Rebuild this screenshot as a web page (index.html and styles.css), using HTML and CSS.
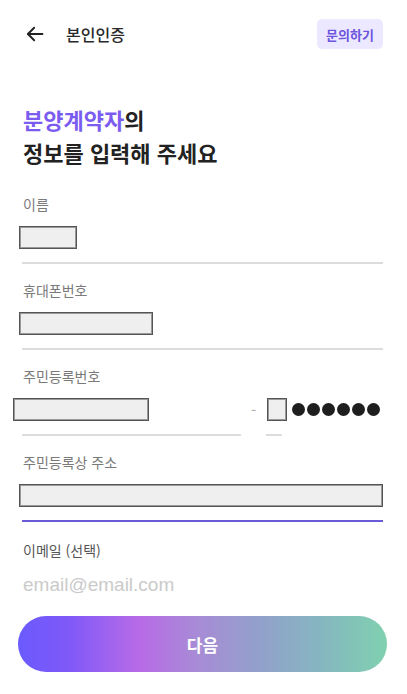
FILE: index.html
```html
<!DOCTYPE html>
<html lang="ko">

    <head>
        <meta charset="UTF-8">
        <meta name="viewport" content="width=device-width, initial-scale=1.0">
        <title>본인인증</title>
        <link rel="stylesheet" href="styles.css">
    </head>

    <body>
        <header class="top">
            <a href="#back" class="top_back" aria-label="뒤로">
                <svg width="20" height="20" viewBox="0 0 24 24" fill="none" stroke="#222" stroke-width="2.3" stroke-linecap="round" stroke-linejoin="round">
                    <path d="M21 12H3.5"/>
                    <path d="M11 4.5 3.5 12l7.5 7.5"/>
                </svg>
            </a>
            <h2 class="top_title">본인인증</h2>
            <a href="#ask" class="top_ask">문의하기</a>
        </header>

        <main class="main">
            <h1 class="main_heading"><span class="main_accent">분양계약자</span>의<br>정보를 입력해 주세요</h1>

            <div class="field">
                <p class="field_label">이름</p>
                <div class="box box-name"></div>
                <div class="field_line"></div>
            </div>

            <div class="field">
                <p class="field_label">휴대폰번호</p>
                <div class="box box-phone"></div>
                <div class="field_line"></div>
            </div>

            <div class="field">
                <p class="field_label">주민등록번호</p>
                <div class="ssn">
                    <div class="box box-front"></div>
                    <span class="ssn_dash">-</span>
                    <div class="ssn_back">
                        <div class="box box-digit"></div>
                        <div class="dots">
                            <span></span><span></span><span></span><span></span><span></span><span></span>
                        </div>
                    </div>
                    <div class="field_line"></div>
                    <div></div>
                    <div class="field_line ssn_short"></div>
                </div>
            </div>

            <div class="field">
                <p class="field_label">주민등록상 주소</p>
                <div class="box box-address"></div>
                <div class="field_line field_line-active"></div>
            </div>

            <div class="field field-email">
                <p class="field_label field_label-dark">이메일 (선택)</p>
                <p class="field_placeholder">email@email.com</p>
            </div>

            <a href="#next" class="next">다음</a>
        </main>
    </body>

</html>
```

FILE: styles.css
```css
* {
    box-sizing: border-box;
    margin: 0;
    padding: 0;
}

body {
    width: 407px;
    font-family: "Noto Sans CJK KR", "Noto Sans", sans-serif;
    background-color: #fff;
    color: #222;
}

a {
    text-decoration: none;
}

.top {
    display: flex;
    align-items: center;
    height: 30px;
    margin-top: 19px;
    padding: 0 24px 0 25px;
}

.top_back {
    display: flex;
    width: 20px;
    height: 20px;
}

.top_title {
    margin-left: 21px;
    font-size: 16px;
    font-weight: 500;
    color: #2a2a2a;
}

.top_ask {
    margin-left: auto;
    width: 66px;
    height: 30px;
    display: grid;
    place-items: center;
    border-radius: 5px;
    background-color: #ece8ff;
    color: #6d55e0;
    font-size: 13px;
    font-weight: 700;
}

.main {
    padding: 0 24px 0 22px;
}

.main_heading {
    margin-top: 54px;
    margin-left: 1px;
    font-size: 22px;
    font-weight: 700;
    line-height: 33px;
    color: #222;
}

.main_accent {
    color: #7a5cf0;
}

.field {
    margin-top: 25px;
}

.field + .field {
    margin-top: 16px;
}

.field_label {
    margin-left: 1px;
    font-size: 14px;
    line-height: 20px;
    color: #7a7a7a;
    margin-bottom: 12px;
}

.field_label-dark {
    color: #555;
}

.box {
    height: 23px;
    background-color: #efefef;
    border: 1px solid #555;
    box-shadow: inset 0 0 0 1px #999;
}

.box-name {
    width: 58px;
    margin-left: -3px;
}

.box-phone {
    width: 134px;
    margin-left: -3px;
}

.box-front {
    width: 136px;
    margin-left: -9px;
}

.box-address {
    width: 364px;
    margin-left: -3px;
}

.box-digit {
    width: 20px;
}

.field_line {
    height: 2px;
    margin-top: 13px;
    background-color: #dcdcdc;
}

.field_line-active {
    background-color: #6b5ad6;
}

.ssn {
    display: grid;
    grid-template-columns: 219px 25px 1fr;
    align-items: center;
}

.ssn_dash {
    text-align: center;
    color: #aaa;
    font-size: 15px;
    line-height: 23px;
}

.ssn_back {
    display: flex;
    align-items: center;
    gap: 5px;
    margin-left: 1px;
}

.ssn_short {
    width: 16px;
}

.dots {
    display: flex;
    gap: 2px;
}

.dots span {
    width: 13px;
    height: 13px;
    border-radius: 50%;
    background-color: #1e1e1e;
}

.field.field-email {
    margin-top: 18px;
}

.field_placeholder {
    margin-top: 3px;
    margin-left: 1px;
    font-family: "Liberation Sans", "Noto Sans", sans-serif;
    font-size: 19px;
    line-height: 26px;
    color: #cacaca;
}

.next {
    display: grid;
    place-items: center;
    height: 56px;
    margin: 18px -4px 0;
    border-radius: 28px;
    background-image: linear-gradient(90deg, #6a5afe 0%, #8059f8 14%, #b86be7 33%, #a88ad6 48%, #949fcc 64%, #85b6c0 82%, #80d1b0 100%);
    color: #fff;
    font-size: 17px;
    font-weight: 700;
}
```
